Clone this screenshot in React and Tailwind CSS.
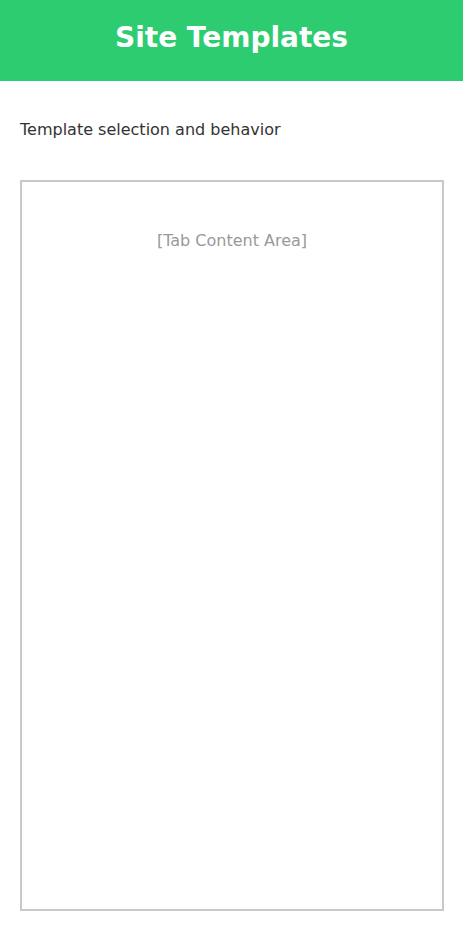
export default function App() {
  return (
    <div className="min-h-[930px] bg-white">
      <div className="h-[81px] bg-[#2ecc71] flex justify-center pt-[21px]">
        <h1 className="text-[28px] leading-[34px] font-bold text-white font-['DejaVu_Sans',sans-serif]">
          Site Templates
        </h1>
      </div>
      <div className="pl-5 pr-[19px] pt-5 pb-5 font-['DejaVu_Sans',sans-serif]">
        <p className="text-[16px] leading-5 text-[#333] mt-[19px] mb-10">Template selection and behavior</p>
        <div className="h-[731px] border-2 border-[#c8c8c8] pt-[47px] text-center">
          <span className="text-[16px] leading-5 text-[#999]">[Tab Content Area]</span>
        </div>
      </div>
    </div>
  );
}
